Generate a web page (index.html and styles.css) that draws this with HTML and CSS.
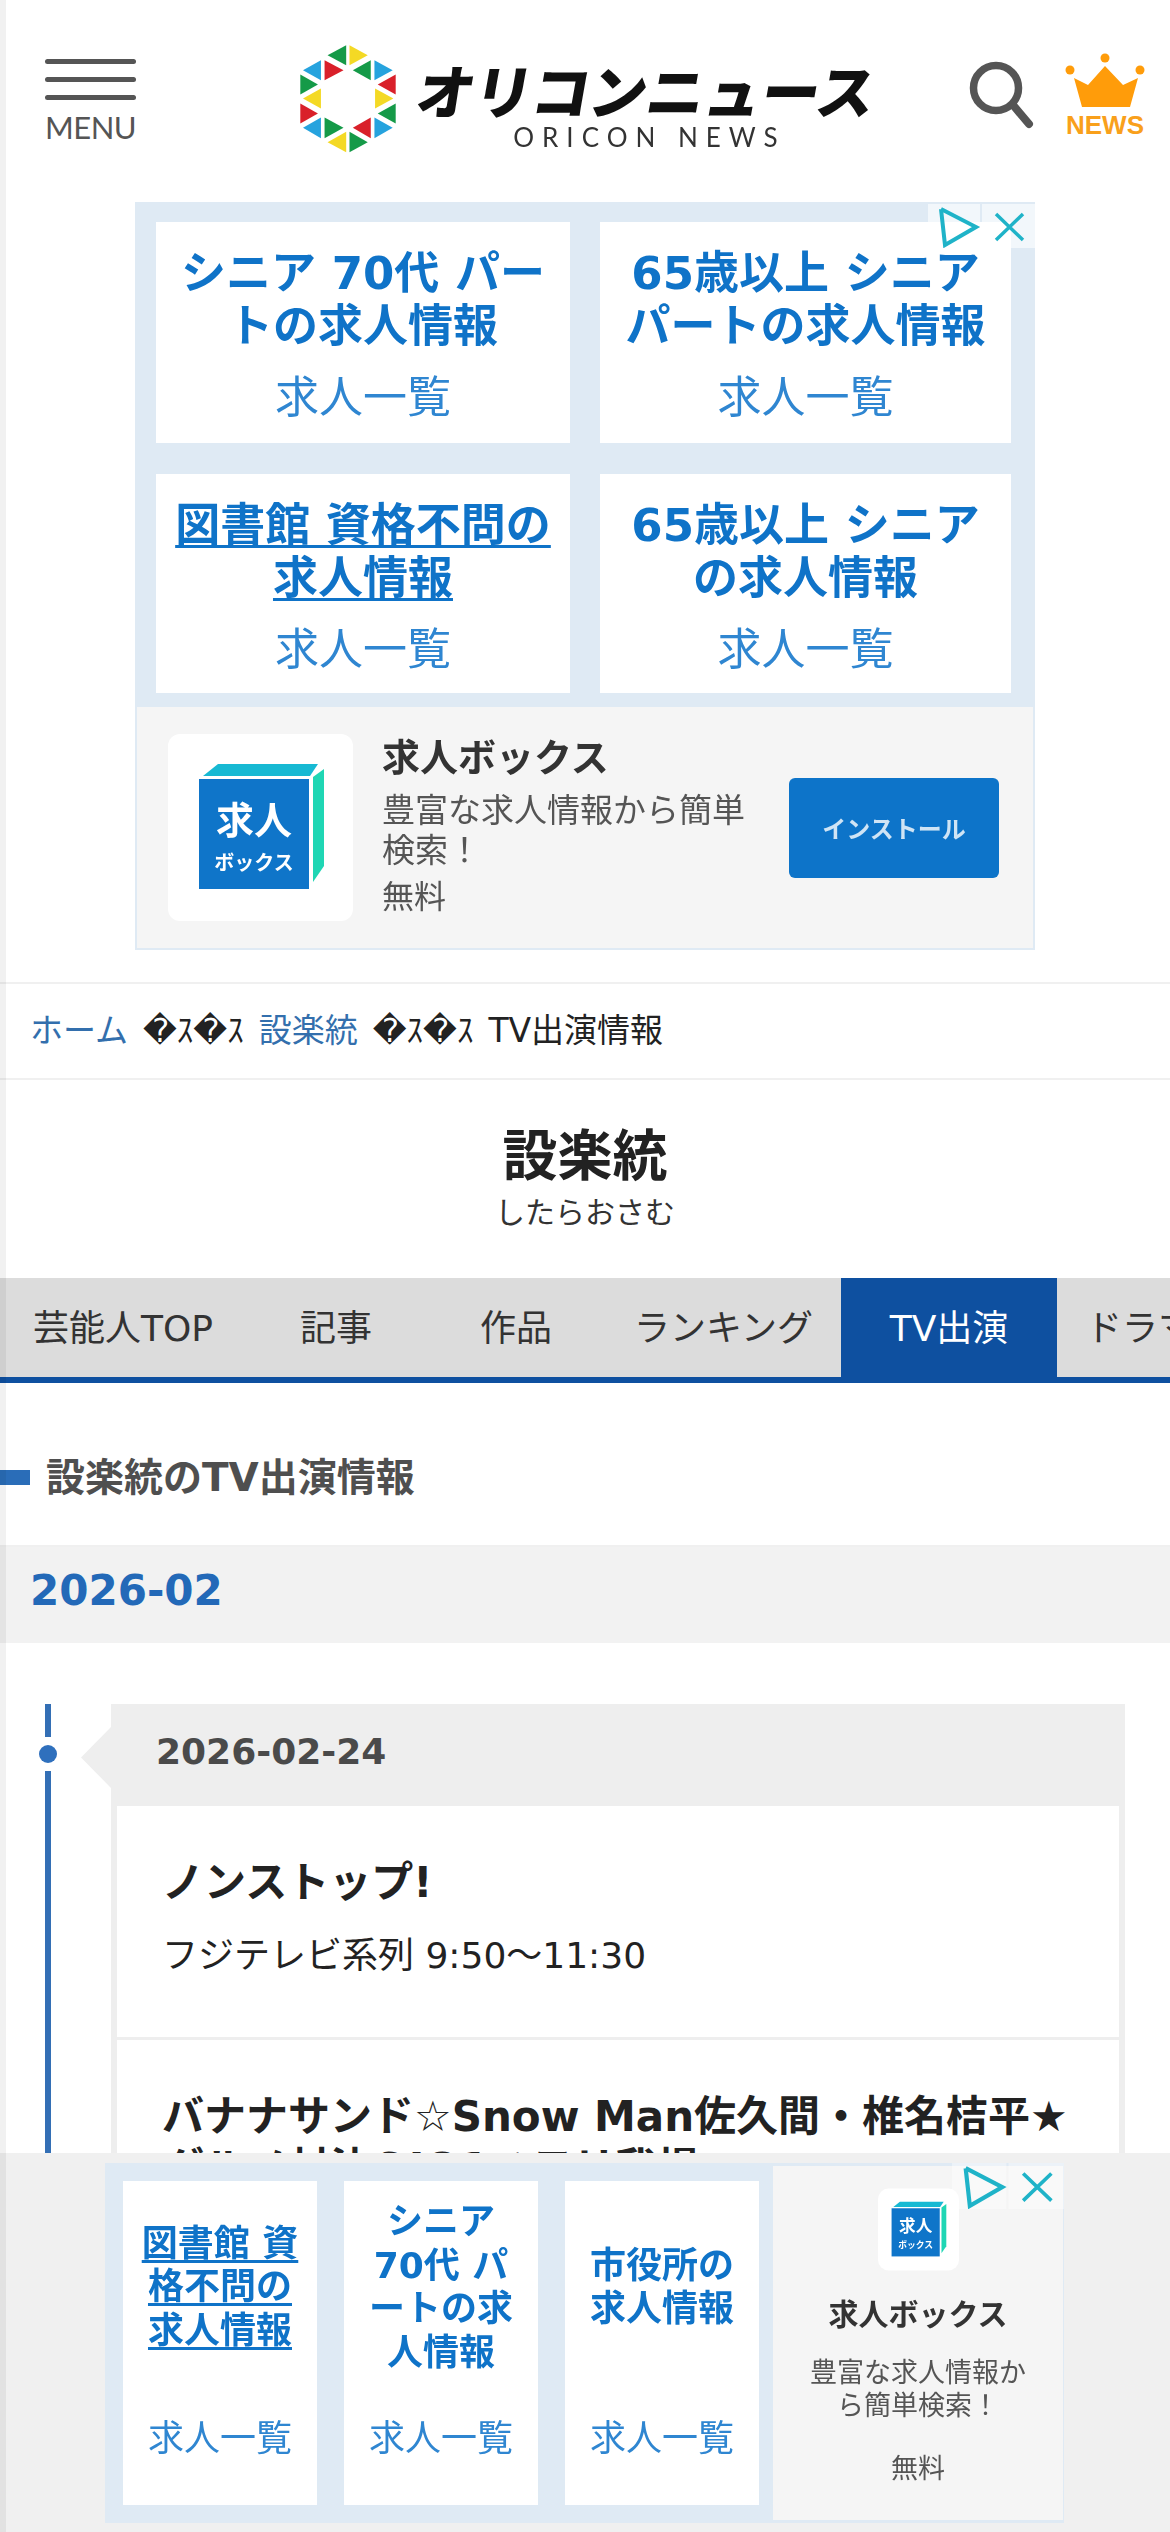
FILE: index.html
```html
<!DOCTYPE html>
<html lang="ja">
<head>
<meta charset="utf-8">
<title>設楽統のTV出演情報</title>
<link rel="stylesheet" href="styles.css">
</head>
<body>
<div class="page">
  <header class="header">
    <div class="menu">
      <span class="bar"></span><span class="bar"></span><span class="bar"></span>
      <span class="menu-label">MENU</span>
    </div>
    <div class="logo">
      <svg class="logo-mark" viewBox="50 35 310 340" aria-hidden="true">
        <g fill="#159a48">
          <polygon points="142,75 198,45 198,105"/><polygon points="218,120 272,90 272,150"/><polygon points="60,133 113,163 60,193"/><polygon points="347,220 347,280 293,250"/><polygon points="133,262 190,293 133,325"/><polygon points="208,305 263,337 208,367"/>
        </g>
        <g fill="#f4d925">
          <polygon points="208,45 263,75 208,105"/><polygon points="122,175 122,235 68,205"/><polygon points="285,175 340,205 285,235"/><polygon points="198,305 198,367 142,337"/>
        </g>
        <g fill="#26a3de">
          <polygon points="68,120 122,90 122,150"/><polygon points="283,90 338,120 283,150"/><polygon points="122,262 122,325 68,293"/><polygon points="283,262 338,293 283,325"/>
        </g>
        <g fill="#d9202a">
          <polygon points="133,90 190,120 133,150"/><polygon points="347,133 347,193 293,163"/><polygon points="60,220 113,250 60,280"/><polygon points="272,262 272,325 218,293"/>
        </g>
      </svg>
      <div class="logo-text">
        <span class="logo-ja">オリコンニュース</span>
        <span class="logo-en">ORICON NEWS</span>
      </div>
    </div>
    <svg class="search" viewBox="0 0 72 72" aria-hidden="true">
      <circle cx="32" cy="30" r="22.5" fill="none" stroke="#555" stroke-width="7.5"/>
      <line x1="49" y1="47" x2="65" y2="66" stroke="#555" stroke-width="8" stroke-linecap="round"/>
    </svg>
    <div class="crown">
      <svg class="crown-icon" viewBox="0 0 84 60" aria-hidden="true">
        <circle cx="7" cy="20" r="4.5" fill="#ff9c0a"/><circle cx="42" cy="8" r="4.5" fill="#ff9c0a"/><circle cx="77" cy="20" r="4.5" fill="#ff9c0a"/>
        <polygon points="11,28 25,35 42,16 60,35 75,28 67,57 19,57" fill="#ff9c0a"/>
      </svg>
      <span class="crown-label">NEWS</span>
    </div>
  </header>

  <section class="ad ad-top">
    <svg class="adchoice" viewBox="0 0 107 44" aria-hidden="true">
      <rect width="52" height="44" fill="#fff" opacity=".6"/><rect x="54" width="53" height="44" fill="#fff" opacity=".6"/>
      <path d="M13 5 L48 23 L17 41 L13 5" fill="none" stroke="#1fb3c8" stroke-width="4"/>
      <path d="M68 10 L95 36 M95 10 L68 36" stroke="#1fb3c8" stroke-width="3.5"/>
    </svg>
    <div class="ad-grid">
      <a class="ad-card"><b class="ad-title">シニア 70代 パー<br>トの求人情報</b><span class="ad-sub">求人一覧</span></a>
      <a class="ad-card"><b class="ad-title">65歳以上 シニア<br>パートの求人情報</b><span class="ad-sub">求人一覧</span></a>
      <a class="ad-card"><b class="ad-title ad-underline">図書館 資格不問の<br>求人情報</b><span class="ad-sub">求人一覧</span></a>
      <a class="ad-card"><b class="ad-title">65歳以上 シニア<br>の求人情報</b><span class="ad-sub">求人一覧</span></a>
    </div>
    <div class="install">
      <svg class="app-icon" viewBox="0 0 185 187">
        <rect width="185" height="187" rx="12" fill="#fff"/>
        <polygon points="35,42 50,30 150,30 142,42" fill="#17b9d3"/>
        <polygon points="145,43 156,35 156,132 145,148" fill="#1fd6b4"/>
        <rect x="31" y="45" width="110" height="110" fill="#0f75c9"/>
        <text x="86" y="100" text-anchor="middle" class="icon-big">求人</text>
        <text x="86" y="136" text-anchor="middle" class="icon-small">ボックス</text>
      </svg>
      <div class="install-text">
        <b class="install-title">求人ボックス</b>
        <p class="install-desc">豊富な求人情報から簡単<br>検索！</p>
        <span class="install-free">無料</span>
      </div>
      <span class="install-btn">インストール</span>
    </div>
  </section>

  <nav class="crumbs">
    <a class="crumb-link">ホーム</a><span>�ｽ�ｽ</span><a class="crumb-link">設楽統</a><span>�ｽ�ｽ</span><span>TV出演情報</span>
  </nav>

  <section class="person">
    <h1 class="person-name">設楽統</h1>
    <p class="person-kana">したらおさむ</p>
  </section>

  <nav class="tabs">
    <a class="tab tab-first">芸能人TOP</a>
    <a class="tab tab-wide">記事</a>
    <a class="tab tab-wide">作品</a>
    <a class="tab tab-rank">ランキング</a>
    <a class="tab tab-active">TV出演</a>
    <a class="tab tab-last">ドラマ</a>
  </nav>

  <h2 class="heading">設楽統のTV出演情報</h2>
  <div class="month">2026-02</div>

  <div class="timeline">
    <div class="rail">
      <span class="rail-line rail-top"></span>
      <span class="rail-dot"></span>
      <span class="rail-line rail-rest"></span>
    </div>
    <div class="day">
      <div class="day-date">2026-02-24</div>
      <article class="prog">
        <h3 class="prog-title">ノンストップ!</h3>
        <p class="prog-meta">フジテレビ系列 9:50～11:30</p>
      </article>
      <article class="prog">
        <h3 class="prog-title">バナナサンド☆Snow Man佐久間・椎名桔平★グルメ対決&amp;JO1ハモリ我慢</h3>
      </article>
    </div>
  </div>
</div>

<aside class="dock">
  <section class="ad ad-bottom">
    <svg class="adchoice adchoice-bottom" viewBox="0 0 107 44" aria-hidden="true">
      <rect width="52" height="44" fill="#fff" opacity=".4"/><rect x="54" width="53" height="44" fill="#fff" opacity=".4"/>
      <path d="M13 5 L48 23 L17 41 L13 5" fill="none" stroke="#1fb3c8" stroke-width="4"/>
      <path d="M68 10 L95 36 M95 10 L68 36" stroke="#1fb3c8" stroke-width="3.5"/>
    </svg>
    <a class="bcard"><b class="bcard-title"><span class="ad-underline">図書館 資<br>格不問の<br>求人情報</span></b><span class="bcard-sub">求人一覧</span></a>
    <a class="bcard"><b class="bcard-title">シニア<br>70代 パ<br>ートの求<br>人情報</b><span class="bcard-sub">求人一覧</span></a>
    <a class="bcard"><b class="bcard-title">市役所の<br>求人情報</b><span class="bcard-sub">求人一覧</span></a>
    <div class="bpanel">
      <svg class="app-icon-small" viewBox="0 0 185 187">
        <rect width="185" height="187" rx="24" fill="#fff"/>
        <polygon points="35,42 50,30 150,30 142,42" fill="#17b9d3"/>
        <polygon points="145,43 156,35 156,132 145,148" fill="#1fd6b4"/>
        <rect x="31" y="45" width="110" height="110" fill="#0f75c9"/>
        <text x="86" y="100" text-anchor="middle" class="icon-big">求人</text>
        <text x="86" y="136" text-anchor="middle" class="icon-small">ボックス</text>
      </svg>
      <b class="bpanel-title">求人ボックス</b>
      <p class="bpanel-desc">豊富な求人情報か<br>ら簡単検索！</p>
      <span class="bpanel-free">無料</span>
    </div>
  </section>
</aside>
</body>
</html>
```
FILE: styles.css
```css
* { box-sizing: border-box; }
html, body { margin: 0; padding: 0; background: #fff; }
body {
  font-family: "DejaVu Sans", "Noto Sans CJK JP", sans-serif;
  color: #222;
}
body::before {
  content: "";
  position: fixed;
  left: 0; top: 0; bottom: 0;
  width: 6px;
  background: rgba(0,0,0,.055);
  z-index: 5;
}
.page { height: 2532px; overflow: hidden; }
a { color: inherit; text-decoration: none; }
h1, h2, h3, p { margin: 0; }

/* header */
.header { display: flex; align-items: flex-start; height: 202px; padding-right: 23px; }
.menu { display: flex; flex-direction: column; gap: 13px; width: 91px; margin: 59px 0 0 45px; color: #555; }
.bar { display: block; height: 5px; border-radius: 3px; background: #555; }
.menu-label { font: 400 31px/34px Lato, sans-serif; letter-spacing: -.5px; margin-top: -3px; text-align: center; white-space: nowrap; }
.logo { display: flex; margin: 42px 0 0 161px; filter: blur(.4px); }
.logo-mark { width: 103px; height: 113px; display: block; }
.logo-text { display: flex; flex-direction: column; align-items: center; width: 452px; margin-left: 21px; }
.logo-ja {
  font: 900 58px/62px "Noto Sans CJK JP", sans-serif;
  color: #111;
  letter-spacing: -.5px;
  margin-top: 16px;
  transform: skewX(-10deg);
  white-space: nowrap;
}
.logo-en { font: 400 26px/30px Lato, sans-serif; letter-spacing: 8px; color: #333; margin: 2px 0 0 5px; white-space: nowrap; }
.search { width: 72px; height: 72px; margin: 58px 0 0 auto; display: block; }
.crown { display: flex; flex-direction: column; align-items: center; width: 84px; margin: 50px 0 0 27px; color: #f9a01b; }
.crown-icon { width: 84px; height: 60px; display: block; }
.crown-label { font: 700 26px/30px "Liberation Sans", sans-serif; }

/* ads */
.ad { position: relative; background: #dfeaf4; filter: blur(.7px); }
.ad-top { width: 900px; height: 748px; margin: 0 auto; }
.adchoice { position: absolute; right: 0; top: 2px; width: 107px; height: 44px; z-index: 2; }
.ad-grid { display: grid; grid-template-columns: 414px 411px; grid-template-rows: 221px 219px; gap: 31px 30px; padding: 20px 24px 0 21px; height: 505px; }
.ad-card { display: flex; flex-direction: column; align-items: center; background: #fff; padding-top: 25px; text-align: center; }
.ad-title { font: 700 45px/53px "DejaVu Sans", "Noto Sans CJK JP", sans-serif; color: #0f73c8; white-space: nowrap; }
.ad-underline { text-decoration: underline; text-underline-offset: 4px; text-decoration-thickness: 3px; }
.ad-sub { font: 400 44px/53px "Noto Sans CJK JP", sans-serif; color: #2f86d1; margin-top: 15px; }

.install { display: flex; align-items: center; height: 243px; background: #f5f5f5; border: 2px solid #dfeaf4; border-top: 0; padding-left: 31px; }
.app-icon { width: 185px; height: 187px; flex: none; display: block; }
.icon-big { font: 700 38px "Noto Sans CJK JP", sans-serif; fill: #fff; }
.icon-small { font: 700 20px "Noto Sans CJK JP", sans-serif; fill: #fff; }
.install-text { display: flex; flex-direction: column; width: 380px; margin: -11px 0 0 29px; }
.install-title { font: 700 38px/48px "Noto Sans CJK JP", sans-serif; color: #333; }
.install-desc { font: 400 33px/40px "Noto Sans CJK JP", sans-serif; color: #555; margin-top: 9px; }
.install-free { font: 400 32px/40px "Noto Sans CJK JP", sans-serif; color: #555; margin-top: 6px; }
.install-btn {
  display: flex; align-items: center; justify-content: center;
  width: 210px; height: 100px; margin-left: 27px;
  background: #0d74c9; border-radius: 6px; color: #cfe4f5;
  font: 700 24px "Noto Sans CJK JP", sans-serif;
}

/* breadcrumb */
.crumbs {
  display: flex; align-items: center; gap: 15px;
  height: 98px; margin-top: 32px; padding: 0 0 6px 30px;
  border-top: 2px solid #f0f0f0; border-bottom: 2px solid #f0f0f0;
  font-size: 33px; color: #222;
}
.crumb-link { color: #336fad; }

/* person */
.person { display: flex; flex-direction: column; align-items: center; height: 198px; padding-top: 41px; }
.person-name { font-size: 55px; line-height: 70px; font-weight: 700; color: #222; }
.person-kana { font-size: 30px; line-height: 40px; margin-top: 2px; color: #333; }

/* tabs */
.tabs { display: flex; height: 105px; background: #dcdcdc; border-bottom: 6px solid #0e50a0; overflow: hidden; font-size: 36px; color: #333; }
.tab { display: flex; align-items: center; justify-content: center; white-space: nowrap; flex: none; padding-bottom: 6px; }
.tab-first { width: 246px; }
.tab-wide { width: 180px; }
.tab-rank { width: 235px; }
.tab-active { width: 216px; background: #0e50a0; color: #fff; }
.tab-last { padding-left: 29px; flex: 1; justify-content: flex-start; }

/* headings */
.heading { position: relative; height: 50px; margin-top: 70px; padding-left: 46px; font-size: 39px; line-height: 50px; font-weight: 700; color: #4f4f4f; }
.heading::before { content: ""; position: absolute; left: 0; top: 17px; width: 30px; height: 15px; background: #2a6db8; }
.month { height: 98px; margin-top: 42px; padding-left: 30px; background: #f2f2f2; border-top: 2px solid #f0f0f0; font-size: 42px; font-weight: 700; line-height: 88px; color: #2369b8; }

/* timeline */
.timeline { display: flex; margin-top: 61px; padding-left: 39px; }
.rail { display: flex; flex-direction: column; align-items: center; width: 18px; margin-right: 54px; }
.rail-line { display: block; width: 6px; background: #336fb5; }
.rail-top { height: 33px; }
.rail-rest { flex: 1; }
.rail-dot { width: 18px; height: 18px; border-radius: 50%; background: #2f70bd; margin: 8px 0; }
.day { position: relative; display: flex; flex-direction: column; gap: 3px; width: 1014px; padding: 0 6px; background: #eee; }
.day::before {
  content: "";
  position: absolute; left: -30px; top: 23px;
  width: 30px; height: 61px;
  background: #eee;
  clip-path: polygon(100% 0, 0 50%, 100% 100%);
}
.day-date { height: 99px; padding: 0 0 0 39px; font-size: 36px; font-weight: 700; line-height: 96px; color: #4a4a4a; }
.prog { background: #fff; padding: 51px 40px 57px 45px; }
.prog-title { font-size: 42px; line-height: 52px; font-weight: 700; color: #222; }
.prog-meta { font-size: 36px; line-height: 48px; margin-top: 23px; color: #222; }

/* bottom dock */
.dock { position: fixed; left: 0; right: 0; bottom: 0; height: 379px; background: #f0f0f0; padding: 10px 0 0 105px; z-index: 4; }
.ad-bottom { display: flex; width: 959px; height: 360px; padding: 18px 0 18px 18px; }
.adchoice-bottom { top: 0; right: 0; width: 112px; height: 46px; }
.bcard { display: flex; flex-direction: column; align-items: center; width: 194px; margin-right: 27px; background: #fff; text-align: center; flex: none; }
.bcard-title { display: flex; align-items: center; justify-content: center; height: 212px; font: 700 36px/43.5px "DejaVu Sans", "Noto Sans CJK JP", sans-serif; color: #0f73c8; white-space: nowrap; }
.bcard-sub { font: 400 36px/44px "Noto Sans CJK JP", sans-serif; color: #2f86d1; margin-top: 20px; }
.bpanel { display: flex; flex-direction: column; align-items: center; width: 290px; margin: -15px 0 -15px -13px; background: #f5f5f5; padding-top: 21px; text-align: center; flex: none; }
.app-icon-small { width: 81px; height: 85px; display: block; flex: none; }
.bpanel-title { font: 700 30px/40px "Noto Sans CJK JP", sans-serif; color: #333; margin-top: 20px; }
.bpanel-desc { font: 400 27px/33px "Noto Sans CJK JP", sans-serif; color: #555; margin-top: 22px; }
.bpanel-free { font: 400 27px/33px "Noto Sans CJK JP", sans-serif; color: #555; margin-top: 30px; }
```
